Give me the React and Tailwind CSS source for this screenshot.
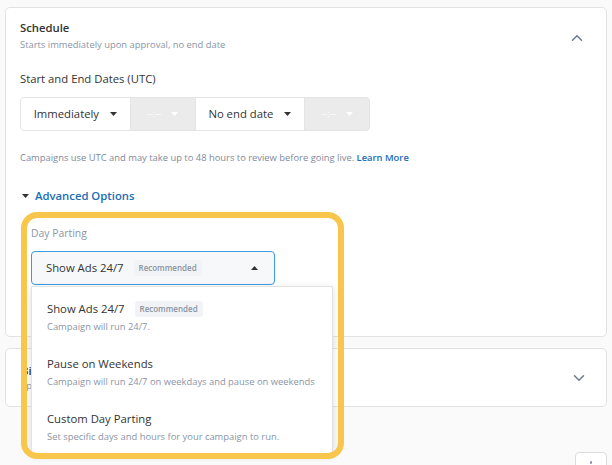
import { ChevronDown, ChevronUp } from "lucide-react";

function Caret({ up = false, className = "" }) {
  return (
    <svg width="7" height="4" viewBox="0 0 7 4" className={className}>
      {up ? <path d="M0 4 L3.5 0 L7 4 Z" fill="currentColor" /> : <path d="M0 0 L7 0 L3.5 4 Z" fill="currentColor" />}
    </svg>
  );
}

function Badge() {
  return (
    <span className="ml-[10px] inline-flex h-[16px] items-center rounded-[3px] bg-[#f1f3f6] px-[5px] text-[8px] font-semibold text-[#8a93a3]">
      Recommended
    </span>
  );
}

const options = [
  { title: "Show Ads 24/7", desc: "Campaign will run 24/7.", badge: true },
  { title: "Pause on Weekends", desc: "Campaign will run 24/7 on weekdays and pause on weekends" },
  { title: "Custom Day Parting", desc: "Set specific days and hours for your campaign to run." },
];

export default function App() {
  return (
    <div className="min-h-screen overflow-hidden bg-[#fafafa] px-[5px] pt-[7px] font-['Open_Sans',sans-serif] text-[#333]">
      {/* Schedule card */}
      <div className="rounded-[5px] border border-[#e2e2e2] bg-white pb-[51px] pl-[14px] pr-[20px] pt-[11px]">
        <div className="flex items-start justify-between">
          <div>
            <div className="text-[11.3px] font-semibold leading-[18px] text-[#333]">Schedule</div>
            <div className="mt-px text-[9.4px] leading-[14px] text-[#8b95a7]">Starts immediately upon approval, no end date</div>
          </div>
          <ChevronUp className="mt-[10px] h-[18px] w-[18px] text-[#6b7a90]" strokeWidth={2} />
        </div>

        <div className="mt-[19px] text-[11.3px] leading-[16px] text-[#333]">Start and End Dates (UTC)</div>

        <div className="mt-[10px] flex h-[34px] w-[350px] overflow-hidden rounded-[4px] border border-[#e4e4e4] bg-[#ebebeb]">
          <div className="flex w-[110px] items-center justify-center gap-[11px] border-r border-[#e4e4e4] bg-white text-[11.3px]">
            Immediately <Caret className="text-[#333]" />
          </div>
          <div className="flex w-[64px] items-center justify-center gap-[10px] text-[9.4px] text-white">
            --:-- <Caret className="text-white" />
          </div>
          <div className="flex w-[111px] items-center justify-center gap-[11px] border-x border-[#e4e4e4] bg-white text-[11.3px]">
            No end date <Caret className="text-[#333]" />
          </div>
          <div className="flex w-[64px] items-center justify-center gap-[10px] text-[9.4px] text-white">
            --:-- <Caret className="text-white" />
          </div>
        </div>

        <div className="mt-[20px] text-[9.4px] leading-[14px] text-[#7f8a9c]">
          Campaigns use UTC and may take up to 48 hours to review before going live.{" "}
          <span className="font-semibold text-[#1b6db5]">Learn More</span>
        </div>

        <div className="mt-[23px] flex items-center gap-[6px] text-[11.3px] font-semibold leading-[16px] text-[#1b6db5]">
          <Caret className="ml-[2px] text-[#333]" />
          Advanced Options
        </div>

        {/* Day parting select, open */}
        <div className="relative ml-[11px] mt-[21px] w-[244px]">
          <div className="text-[10.4px] leading-[16px] text-[#8b95a7]">Day Parting</div>
          <div className="mt-[10px] flex h-[34px] items-center rounded-[4px] border border-[#3d9be0] bg-[#f7f8fa] pl-[14px] pr-[16px]">
            <span className="text-[11.3px] text-[#333]">Show Ads 24/7</span>
            <Badge />
            <Caret up className="ml-auto text-[#333]" />
          </div>

          <div className="absolute left-0 top-[61px] z-10 h-[168px] w-[302px] overflow-hidden rounded-b-[3px] border border-[#e2e2e2] bg-white shadow-[0_2px_8px_rgba(0,0,0,0.12)]">
            {options.map((o) => (
              <div key={o.title} className="h-[55px] pl-[15px] pt-[14px]">
                <div className="flex h-[16px] items-center whitespace-nowrap text-[11.3px] text-[#333]">
                  {o.title}
                  {o.badge && <Badge />}
                </div>
                <div className="mt-[3px] whitespace-nowrap text-[9.4px] leading-[14px] text-[#8b95a7]">{o.desc}</div>
              </div>
            ))}
          </div>

          <div className="pointer-events-none absolute -left-[10px] -top-[13px] z-20 h-[247px] w-[323px] rounded-[16px] border-[6px] border-[#f7c64b]" />
        </div>
      </div>

      {/* Collapsed card */}
      <div className="mt-[11px] flex h-[59px] items-center justify-between rounded-[5px] border border-[#e2e2e2] bg-white pl-[15px] pr-[18px]">
        <div>
          <div className="text-[11.3px] font-semibold leading-[16px] text-[#333]">Bidding</div>
          <div className="text-[9.4px] leading-[14px] text-[#8b95a7]">Spend evenly across the day</div>
        </div>
        <ChevronDown className="h-[18px] w-[18px] text-[#6b7a90]" strokeWidth={2} />
      </div>

      <div className="mt-[45px] flex justify-end">
        <div className="flex h-[32px] w-[32px] justify-center rounded-[4px] border border-[#dcdcdc] bg-white pt-[8px]">
          <span className="h-[3px] w-[2px] rounded-full bg-[#8b95a7]" />
        </div>
      </div>
    </div>
  );
}
